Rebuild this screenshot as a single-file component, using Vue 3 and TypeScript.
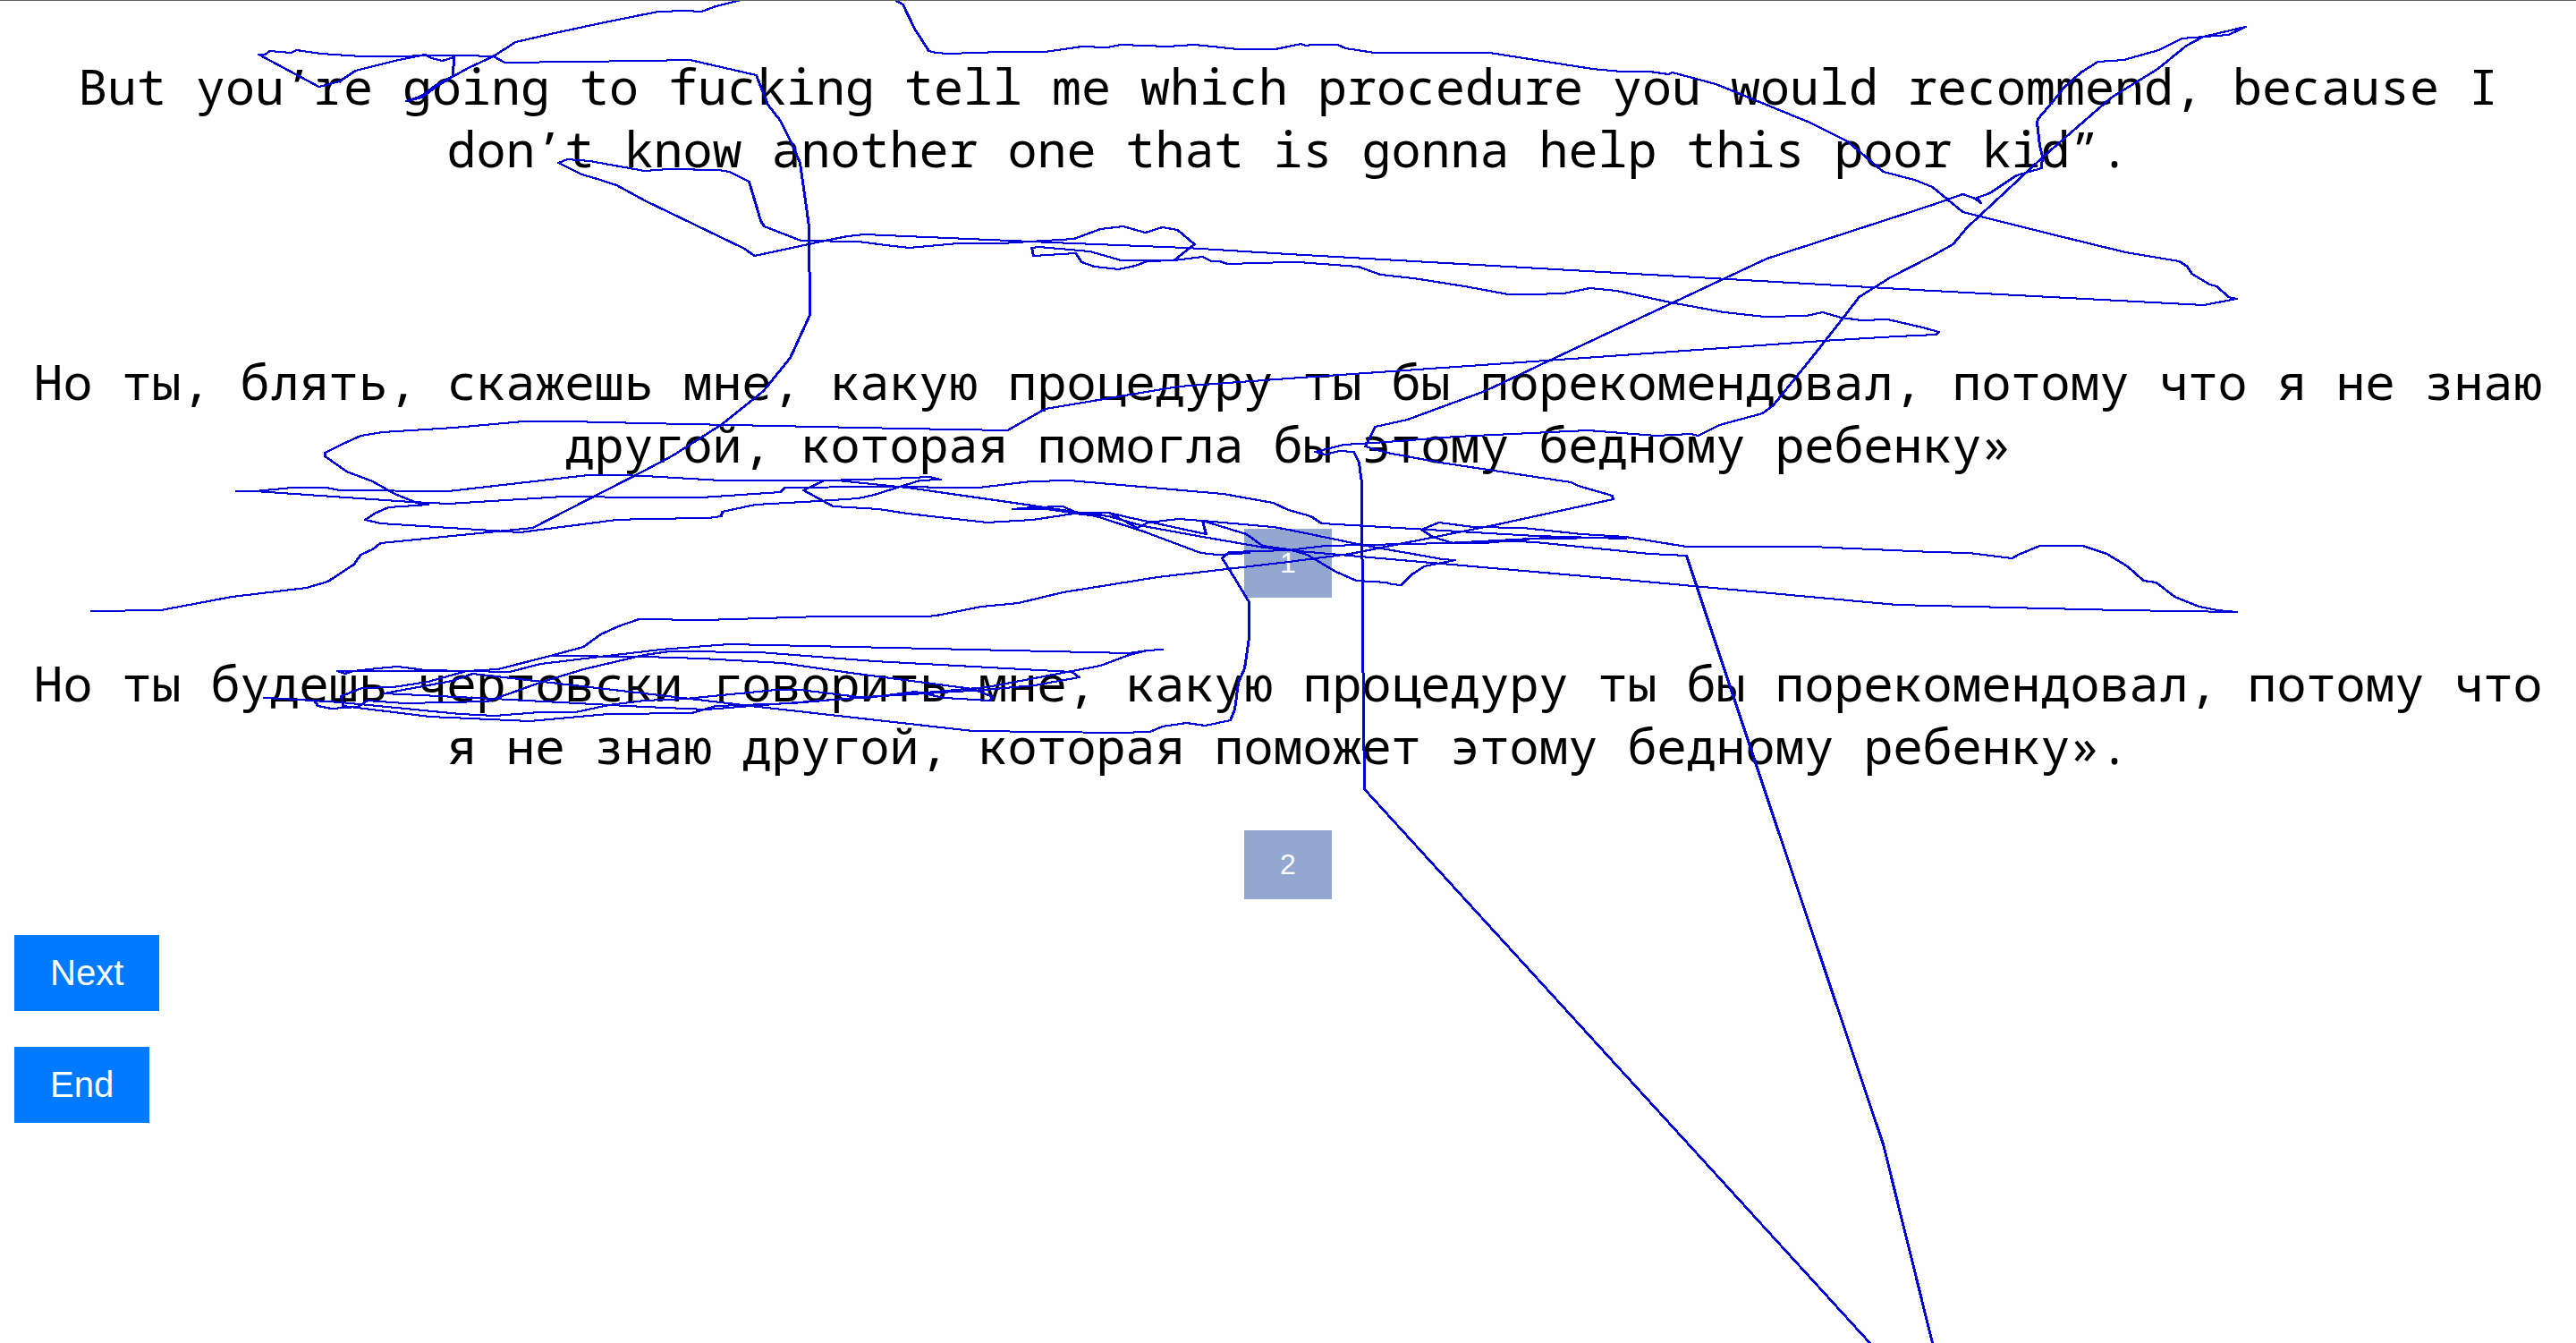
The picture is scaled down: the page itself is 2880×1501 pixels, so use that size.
<script setup lang="ts">
interface Variant {
  id: number
  text: string
}

const source: string =
  'But you’re going to fucking tell me which procedure you would recommend, because I don’t know another one that is gonna help this poor kid”.'

const variants: Variant[] = [
  {
    id: 1,
    text: 'Но ты, блять, скажешь мне, какую процедуру ты бы порекомендовал, потому что я не знаю другой, которая помогла бы этому бедному ребенку»',
  },
  {
    id: 2,
    text: 'Но ты будешь чертовски говорить мне, какую процедуру ты бы порекомендовал, потому что я не знаю другой, которая поможет этому бедному ребенку».',
  },
]

// Recorded gaze trail, one list of points per uninterrupted stroke.
const strokes: string[] = [
  // first line of the source text
  '551,63 519,62 404,63 358,60 331,56 325,59 301,57 296,61 289,61 356,97 379,91 397,79 441,68 475,61 482,65 494,68 507,64 506,85 487,95 471,107 454,113 471,109 487,97 505,86 523,76 551,63 576,47 615,38 666,27 720,16 736,13 766,12 784,13 800,7 828,0',
  '1000,0 1009,5 1022,32 1038,57 1046,59 1060,60 1119,58 1168,58 1209,52 1237,53 1253,50 1305,52 1335,50 1384,55 1425,55 1440,52 1454,49 1459,51 1468,50 1495,50 1504,54 1536,59 1665,59 1780,77 1812,80 1844,80 1865,83 1869,81 1918,94 2023,137 2065,158 2105,192 2140,201 2160,209 2194,237 2298,263 2376,282 2436,292 2445,298 2450,306 2470,318 2478,320 2491,332 2500,334 2463,341 2160,325 1440,284 1326,277 1175,271 1129,269 966,262 947,264 922,269 843,286 832,278 720,224 689,207 664,199 650,195 624,182 634,178 659,180 720,191 747,189 803,190 815,192 837,203 846,233 850,247 854,253 895,269 959,270 998,275 1016,277 1071,272 1119,272 1200,267 1230,256 1255,253 1280,260 1299,254 1316,257 1335,273 1312,291 1282,292 1269,297 1250,301 1223,298 1209,293 1202,283 1155,286 1153,277 1161,276 1218,281 1253,291 1312,291 1344,287 1354,292 1363,292 1372,295 1440,293 1451,293 1518,298 1543,307 1580,311 1637,320 1686,329 1711,329 1748,328 1777,322 1807,325 1867,338 1927,349 1973,354 2019,353 2037,349 2058,355 2081,358 2110,357 2149,366 2160,369 2167,371 2164,374 2120,376 2037,381 1771,400 1440,423 1317,432 1168,457 1126,481 1009,479 720,473 634,471 585,471 507,478 427,483 403,487 381,497 363,506 363,510 387,527 416,538 441,552 468,563 478,564 434,567 418,574 408,581 425,585 581,595 689,581 720,580 791,579 806,577 807,572 844,564 915,560 959,557 977,553 1028,537 1051,536 1039,533 996,535 921,537 805,537 720,532 693,531 657,531 501,549 379,548 365,545 326,545 285,549 264,549 285,549 459,561 501,563 629,555 720,556 784,556 872,550 877,545 977,544 1094,545 1152,538 1195,537 1367,552 1423,562 1440,570 1465,577 1477,585 1716,599 1817,602 1738,600 1658,607 1624,607 1601,600 1589,592 1608,584 1647,589 1702,590 1768,597 1817,600 1885,611 2025,611 2160,617 2201,618 2249,624 2256,620 2280,610 2328,610 2355,619 2378,633 2396,649 2410,651 2431,667 2458,678 2479,682 2500,684 2371,682 2160,677 2120,676 1817,648 1440,615 1413,612 1344,600 1278,588 1239,577 1207,573 1154,565 1014,545 936,537',
  // descent from the source text to the left margin
  '551,63 564,70 720,68 771,67 845,84 858,117 872,135 886,163 894,182 904,253 905,352 883,400 853,437 807,474 752,509 720,526 595,590 425,607 416,614 403,620 395,631 366,650 342,657 259,667 179,682 101,683',
  // between the first variant and its button
  '921,537 898,548 931,566 982,569 1014,574 1103,584 1154,581 1207,573 1239,573 1271,590 1283,584 1317,580 1344,582 1423,589 1440,592 1527,610 1590,621 1612,625 1626,626 1592,633 1578,642 1566,654 1555,653 1550,651 1516,649 1493,639 1461,620 1440,614 1411,610 1393,597 1344,582 1348,597 1260,578 1239,573 1207,575 1188,566 1154,567 1132,569 1170,569 1225,577 1278,594 1342,618 1361,620 1397,618',
  '1817,601 1711,602 1617,607 1481,610 1440,615 1374,617 1366,624 1381,648 1396,673 1396,713 1391,747 1384,763 1380,793 1375,805 1347,811 1326,808 1299,812 1285,818 1250,819 1087,817 839,789 720,775 528,753 505,761 429,775 551,781 720,790 789,793 839,789 1023,775 1103,768 1230,744 1262,732 1282,727 1299,726 1282,727 1262,730 996,724 814,720 738,726 670,734 604,742 569,751 475,749 444,745 422,747 395,750 385,753 377,750 521,750 556,748 615,733 652,723 671,709 691,700 714,692 787,693 917,689 1037,689 1046,688 1097,678 1138,674 1188,662 1294,645 1440,628 1509,619 1564,608 1665,588 1803,558 1802,554 1764,543 1756,539 1716,533 1610,517 1550,506 1526,499 1537,477 1573,469 1660,437 1738,400 1975,289 2160,229 2194,217 2208,222 2214,227 2210,221 2224,216 2254,196 2282,188 2283,175 2280,163 2277,137 2278,133 2295,113 2307,98 2326,81 2345,69 2374,67 2413,56 2439,43 2491,39 2510,30 2463,41 2444,51 2412,77 2360,109 2284,175 2199,254 2183,273 2160,286 2113,310 2078,332 2062,353 2025,400 1982,453 1970,462 1922,475 1898,487 1890,485 1851,487 1775,481 1628,488 1550,494 1502,497 1470,505 1481,508 1497,504 1513,505 1519,517 1522,540 1523,708 1525,882 2090,1501',
  // back and forth over the second variant
  '615,733 720,734 784,736 874,741 950,752 1087,770 1110,779 1106,783 1055,780 1023,773 968,780 894,771 867,771 766,781 720,783 680,788 643,796 602,796 553,800 514,798 381,785 317,781 295,780 351,783 355,789 370,792 400,790 410,783 452,786 544,784 606,762 652,748 720,732 748,728 849,729 977,739 1198,751 1206,757 1156,766 1101,771 968,779 885,786 800,789 773,797 680,798 592,806 480,801 383,789 381,778 404,769 439,768 478,762 521,750',
  // exit through the bottom edge
  '1674,604 1716,606 1844,619 1885,621 1978,900 2105,1279 2160,1501',
]

// The pen is one pixel wider than it is tall, so each stroke gets a second pass.
const penPasses: number[] = [0, 1]
</script>

<template>
  <main class="page">
    <p class="phrase source">{{ source }}</p>
    <section v-for="variant in variants" :key="variant.id" class="variant">
      <p :id="`variant-${variant.id}`" class="phrase">{{ variant.text }}</p>
      <button type="button" class="pick" :aria-describedby="`variant-${variant.id}`">
        {{ variant.id }}
      </button>
    </section>
    <nav class="actions">
      <button type="button" class="action">Next</button>
      <button type="button" class="action">End</button>
    </nav>
    <svg class="trail" aria-hidden="true">
      <g v-for="shift in penPasses" :key="shift" :transform="`translate(${shift} 0)`">
        <polyline v-for="(points, index) in strokes" :key="index" :points="points" />
      </g>
    </svg>
  </main>
</template>

<style>
body {
  margin: 0;
  background: #fefefe;
}
</style>

<style scoped>
.page {
  position: relative;
  box-sizing: border-box;
  min-height: 100vh;
  padding: 60px 16px 40px;
  border-top: 1px solid #5f5f5f;
  overflow: hidden;
}

.phrase {
  margin: 0;
  font: 55px/70px Consolas, "Noto Sans Mono", "DejaVu Sans Mono", monospace;
  text-align: center;
  color: #000;
}

.source {
  margin-bottom: 190px;
}

.variant {
  display: flex;
  flex-direction: column;
  align-items: center;
  gap: 60px;
}

.variant + .variant {
  margin-top: 60px;
}

.pick,
.action {
  border: 0;
  border-radius: 0;
  color: #fff;
  font-family: "Liberation Sans", Arial, sans-serif;
  cursor: pointer;
}

.pick {
  padding: 20px 40px;
  background: #93a7d0;
  font-size: 32px;
  line-height: 37px;
}

.actions {
  display: flex;
  flex-direction: column;
  align-items: flex-start;
  gap: 40px;
  margin-top: 40px;
}

.action {
  padding: 20px 40px;
  background: #007bff;
  font-size: 40px;
  line-height: 45px;
}

.trail {
  position: absolute;
  top: -1px;
  left: 0;
  width: 100%;
  height: calc(100% + 1px);
  pointer-events: none;
  fill: none;
  stroke: #0000d8;
  stroke-width: 2;
  stroke-linejoin: round;
  shape-rendering: crispEdges;
}
</style>
